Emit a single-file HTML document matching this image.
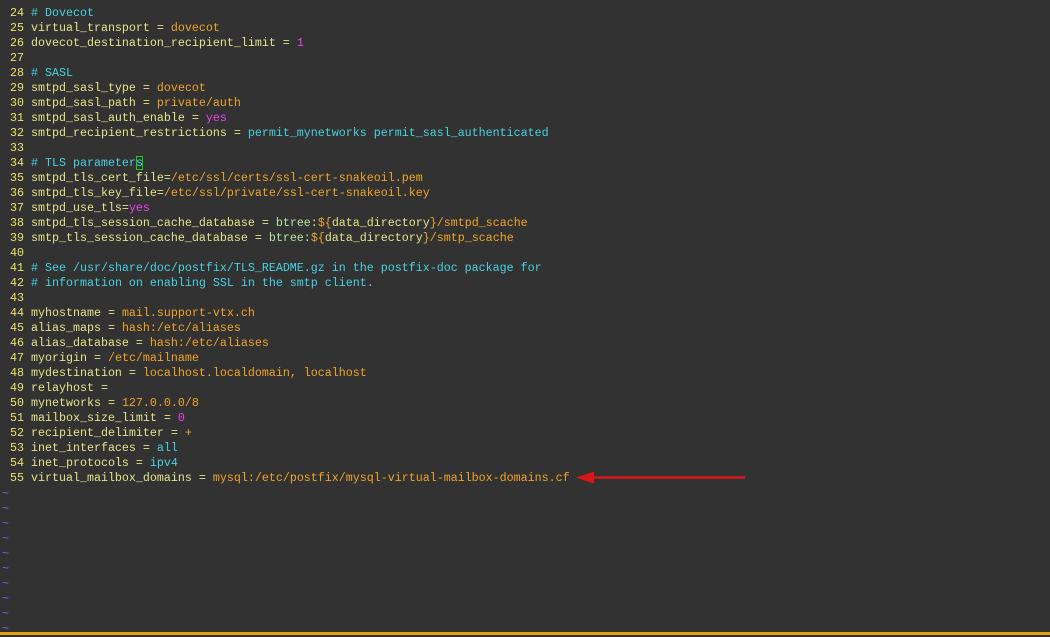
<!DOCTYPE html>
<html><head><meta charset="utf-8"><style>
html,body{margin:0;padding:0;background:#323232;width:1050px;height:635px;overflow:hidden}
pre{margin:0;position:absolute;left:10px;top:6px;font-family:"Liberation Mono",monospace;font-size:11.67px;line-height:15px;color:#e4e48a;white-space:pre}
.n{color:#e8e46a}.v{color:#f0a428}.c{color:#46d2e2}.m{color:#f040f0}.g{color:#b6e6a0}.t{color:#6a6ae8}
.cur{outline:1px solid #18d018;outline-offset:-1px}
#bar{position:absolute;left:0;top:632px;width:1050px;height:3px;background:#e8a010}
</style></head><body>
<pre><span class="n">24</span> <span class="c"># Dovecot</span>
<span class="n">25</span> virtual_transport = <span class="v">dovecot</span>
<span class="n">26</span> dovecot_destination_recipient_limit = <span class="m">1</span>
<span class="n">27</span>
<span class="n">28</span> <span class="c"># SASL</span>
<span class="n">29</span> smtpd_sasl_type = <span class="v">dovecot</span>
<span class="n">30</span> smtpd_sasl_path = <span class="v">private/auth</span>
<span class="n">31</span> smtpd_sasl_auth_enable = <span class="m">yes</span>
<span class="n">32</span> smtpd_recipient_restrictions = <span class="c">permit_mynetworks permit_sasl_authenticated</span>
<span class="n">33</span>
<span class="n">34</span> <span class="c"># TLS parameter<span class="cur">s</span></span>
<span class="n">35</span> smtpd_tls_cert_file=<span class="v">/etc/ssl/certs/ssl-cert-snakeoil.pem</span>
<span class="n">36</span> smtpd_tls_key_file=<span class="v">/etc/ssl/private/ssl-cert-snakeoil.key</span>
<span class="n">37</span> smtpd_use_tls=<span class="m">yes</span>
<span class="n">38</span> smtpd_tls_session_cache_database = <span class="g">btree:</span><span class="v">${</span>data_directory<span class="v">}/smtpd_scache</span>
<span class="n">39</span> smtp_tls_session_cache_database = <span class="g">btree:</span><span class="v">${</span>data_directory<span class="v">}/smtp_scache</span>
<span class="n">40</span>
<span class="n">41</span> <span class="c"># See /usr/share/doc/postfix/TLS_README.gz in the postfix-doc package for</span>
<span class="n">42</span> <span class="c"># information on enabling SSL in the smtp client.</span>
<span class="n">43</span>
<span class="n">44</span> myhostname = <span class="v">mail.support-vtx.ch</span>
<span class="n">45</span> alias_maps = <span class="v">hash:/etc/aliases</span>
<span class="n">46</span> alias_database = <span class="v">hash:/etc/aliases</span>
<span class="n">47</span> myorigin = <span class="v">/etc/mailname</span>
<span class="n">48</span> mydestination = <span class="v">localhost.localdomain, localhost</span>
<span class="n">49</span> relayhost =
<span class="n">50</span> mynetworks = <span class="v">127.0.0.0/8</span>
<span class="n">51</span> mailbox_size_limit = <span class="m">0</span>
<span class="n">52</span> recipient_delimiter = <span class="v">+</span>
<span class="n">53</span> inet_interfaces = <span class="c">all</span>
<span class="n">54</span> inet_protocols = <span class="c">ipv4</span>
<span class="n">55</span> virtual_mailbox_domains = <span class="v">mysql:/etc/postfix/mysql-virtual-mailbox-domains.cf</span>
</pre>
<pre style="left:2px;top:487px" class="t">~
~
~
~
~
~
~
~
~
~</pre>
<svg style="position:absolute;left:0;top:0" width="1050" height="635">
<line x1="590" y1="477.5" x2="745" y2="477.5" stroke="#d81818" stroke-width="2.5"/>
<polygon points="576,477.5 594,471.5 594,483.5" fill="#d81818"/>
</svg>
<div id="bar"></div>
</body></html>
